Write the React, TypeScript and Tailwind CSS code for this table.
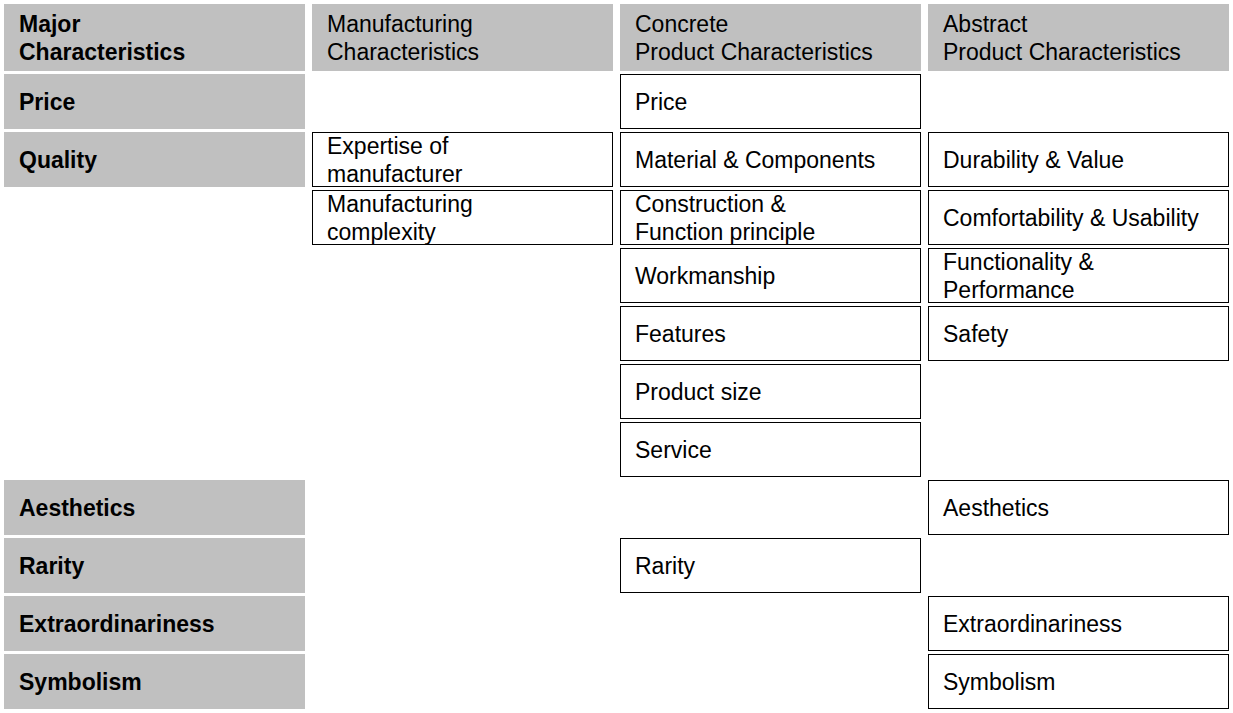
import React from "react";

const rowCls: Record<number, string> = {
  1: "row-start-1",
  2: "row-start-2",
  3: "row-start-3",
  4: "row-start-4",
  5: "row-start-5",
  6: "row-start-6",
  7: "row-start-7",
  8: "row-start-8",
  9: "row-start-9",
  10: "row-start-10",
  11: "row-start-11",
  12: "row-start-12",
};
const colCls: Record<number, string> = {
  1: "col-start-1",
  2: "col-start-2",
  3: "col-start-3",
  4: "col-start-4",
};

const cells: { r: number; c: number; lines: string[]; kind: "head" | "major" | "box" }[] = [
  { r: 1, c: 1, lines: ["Major", "Characteristics"], kind: "major" },
  { r: 2, c: 1, lines: ["Price"], kind: "major" },
  { r: 3, c: 1, lines: ["Quality"], kind: "major" },
  { r: 9, c: 1, lines: ["Aesthetics"], kind: "major" },
  { r: 10, c: 1, lines: ["Rarity"], kind: "major" },
  { r: 11, c: 1, lines: ["Extraordinariness"], kind: "major" },
  { r: 12, c: 1, lines: ["Symbolism"], kind: "major" },

  { r: 1, c: 2, lines: ["Manufacturing", "Characteristics"], kind: "head" },
  { r: 3, c: 2, lines: ["Expertise of", "manufacturer"], kind: "box" },
  { r: 4, c: 2, lines: ["Manufacturing", "complexity"], kind: "box" },

  { r: 1, c: 3, lines: ["Concrete", "Product Characteristics"], kind: "head" },
  { r: 2, c: 3, lines: ["Price"], kind: "box" },
  { r: 3, c: 3, lines: ["Material & Components"], kind: "box" },
  { r: 4, c: 3, lines: ["Construction &", "Function principle"], kind: "box" },
  { r: 5, c: 3, lines: ["Workmanship"], kind: "box" },
  { r: 6, c: 3, lines: ["Features"], kind: "box" },
  { r: 7, c: 3, lines: ["Product size"], kind: "box" },
  { r: 8, c: 3, lines: ["Service"], kind: "box" },
  { r: 10, c: 3, lines: ["Rarity"], kind: "box" },

  { r: 1, c: 4, lines: ["Abstract", "Product Characteristics"], kind: "head" },
  { r: 3, c: 4, lines: ["Durability & Value"], kind: "box" },
  { r: 4, c: 4, lines: ["Comfortability & Usability"], kind: "box" },
  { r: 5, c: 4, lines: ["Functionality &", "Performance"], kind: "box" },
  { r: 6, c: 4, lines: ["Safety"], kind: "box" },
  { r: 9, c: 4, lines: ["Aesthetics"], kind: "box" },
  { r: 11, c: 4, lines: ["Extraordinariness"], kind: "box" },
  { r: 12, c: 4, lines: ["Symbolism"], kind: "box" },
];

export default function App() {
  return (
    <div
      className="w-[1233px] h-[713px] bg-white text-black overflow-hidden"
      style={{ fontFamily: '"Liberation Sans", Arial, sans-serif' }}
    >
      <div className="grid grid-cols-[repeat(4,301px)] grid-rows-[67px_repeat(11,55px)] gap-x-[7px] gap-y-[3px] p-[4px]">
        {cells.map((cell, i) => {
          const base = `${rowCls[cell.r]} ${colCls[cell.c]} flex flex-col justify-center text-[23px] leading-[28px] whitespace-nowrap`;
          const kindCls =
            cell.kind === "major"
              ? "bg-[#c0c0c0] font-bold pl-[15px]"
              : cell.kind === "head"
              ? "bg-[#c0c0c0] pl-[15px]"
              : "border border-black pl-[14px]";
          return (
            <div key={i} className={`${base} ${kindCls}`}>
              {cell.lines.map((l, j) => (
                <span key={j}>{l}</span>
              ))}
            </div>
          );
        })}
      </div>
    </div>
  );
}
